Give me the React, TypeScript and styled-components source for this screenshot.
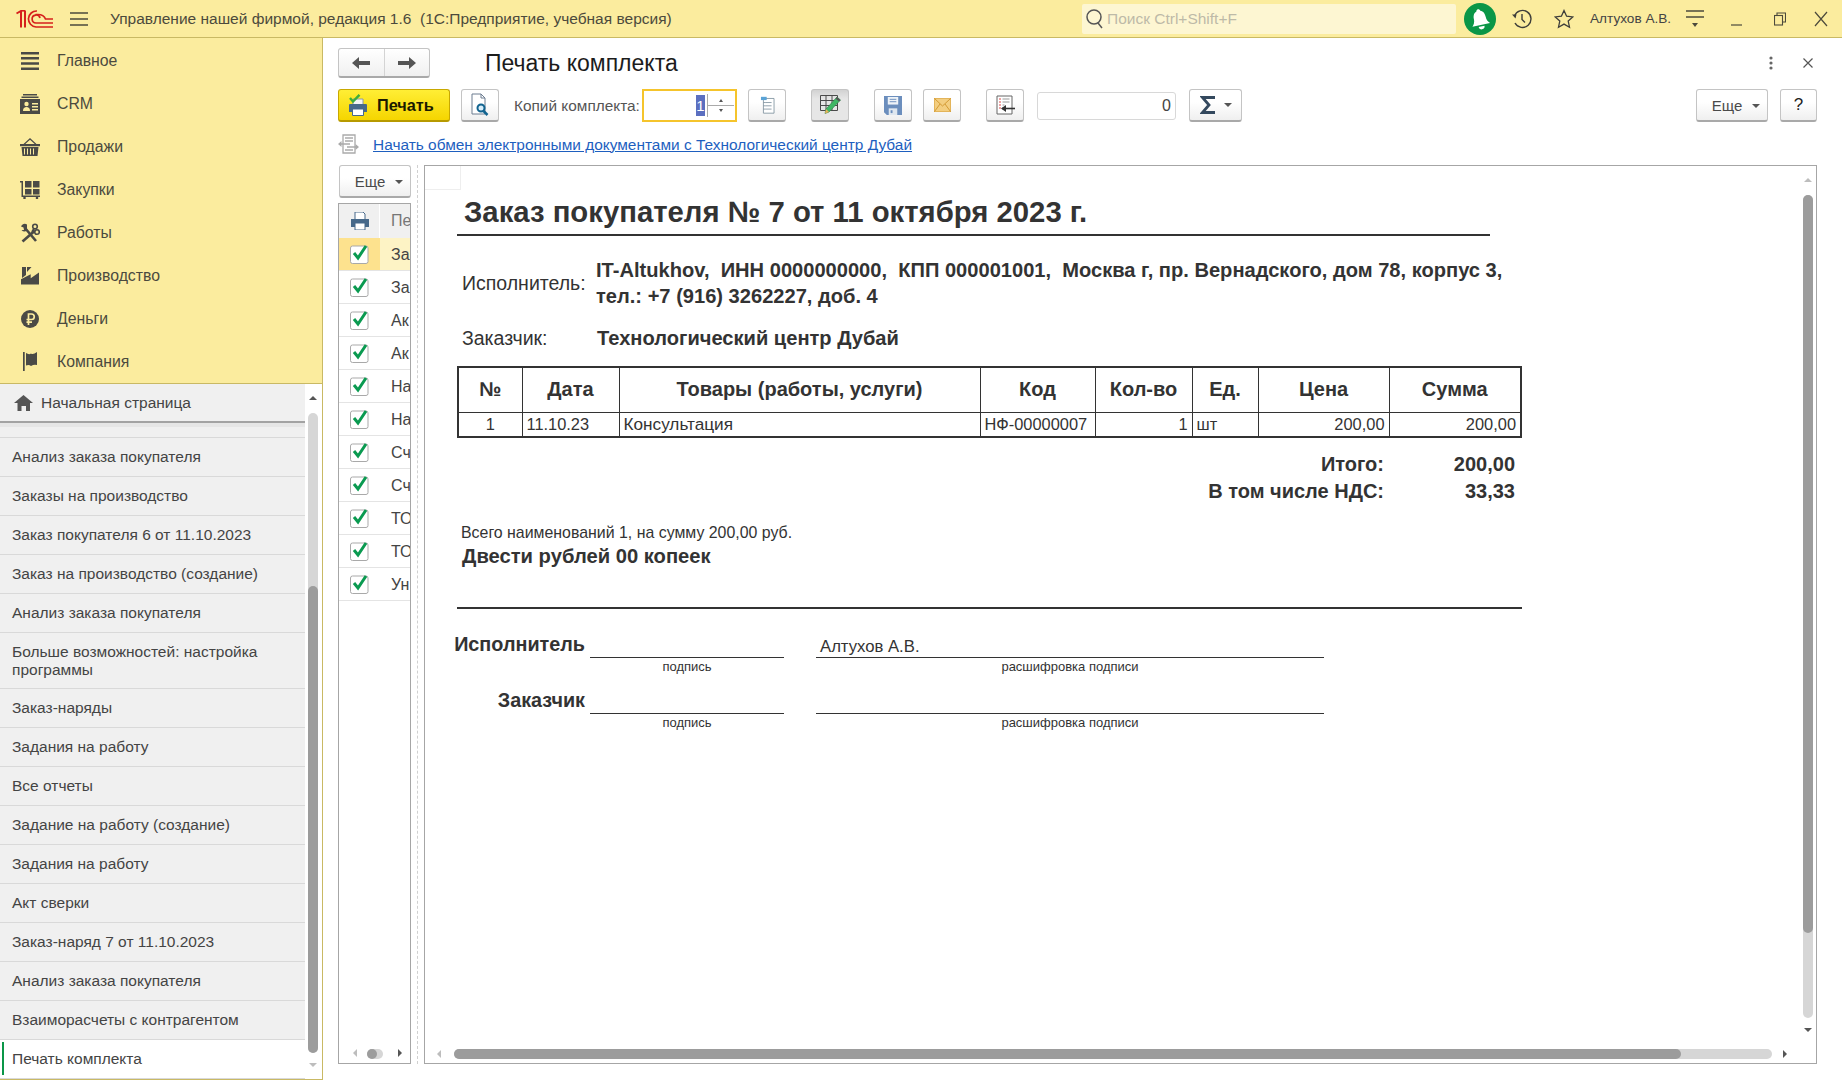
import React from 'react';
import styled, { createGlobalStyle } from 'styled-components';

const Global = createGlobalStyle`
  html, body { margin: 0; padding: 0; height: 1080px; overflow: hidden; background: #fff; }
  body { font-family: "Liberation Sans", Arial, sans-serif; color: #333; }
  * { box-sizing: border-box; }
`;

const Shell = styled.div`
  width: 1842px;
  height: 1080px;
  display: grid;
  grid-template-rows: 38px 1fr;
  overflow: hidden;
`;

const TopBar = styled.header`
  display: flex;
  align-items: center;
  background: #fbec9e;
  border-bottom: 1px solid #c9b964;
  padding-left: 16px;
`;

const AppTitle = styled.div`
  margin-left: 22px;
  width: 972px;
  font-size: 15.5px;
  color: #4c4a3c;
  white-space: pre;
`;

const Search = styled.div`
  width: 374px;
  height: 30px;
  display: flex;
  align-items: center;
  gap: 3px;
  padding-left: 3px;
  background: #fdf6d2;
  border-radius: 2px;
  font-size: 15.5px;
  color: #bdbaa8;
`;

const Bell = styled.div`
  width: 32px;
  height: 32px;
  margin-left: 8px;
  border-radius: 50%;
  background: #0a9647;
  display: flex;
  align-items: center;
  justify-content: center;
`;

const TopIcon = styled.div<{ $ml: number }>`
  margin-left: ${p => p.$ml}px;
  display: flex;
`;

const UserName = styled.div`
  margin-left: 16px;
  width: 81px;
  font-size: 13.6px;
  color: #444;
  white-space: nowrap;
`;

const Main = styled.div`
  display: grid;
  grid-template-columns: 323px 1fr;
  min-height: 0;
`;

const Side = styled.aside`
  display: flex;
  flex-direction: column;
  border-right: 1px solid #c9b964;
  border-bottom: 1px solid #c9b964;
  min-height: 0;
`;

const Sections = styled.nav`
  height: 346px;
  flex: none;
  padding-top: 1px;
  background: #fbec9e;
  border-bottom: 1px solid #c9b964;
`;

const SectionRow = styled.div`
  height: 43px;
  display: flex;
  align-items: center;
  padding-left: 19px;
  gap: 16px;
  font-size: 15.8px;
  color: #4b4a3e;
`;

const SectionIcon = styled.span`
  width: 22px;
  height: 22px;
  display: flex;
  align-items: center;
  justify-content: center;
`;

const HistoryWrap = styled.div`
  position: relative;
  flex: 1;
  min-height: 0;
  background: #fff;
`;

const HistoryList = styled.div`
  width: 305px;
  height: 100%;
  background: #f0f0f0;
  display: flex;
  flex-direction: column;
`;

const HomeTab = styled.div`
  height: 39px;
  flex: none;
  display: flex;
  align-items: center;
  gap: 8px;
  padding: 0 0 0 14px;
  background: #f0f0f0;
  border-bottom: 2px solid #a3a3a3;
  font-size: 15.5px;
  color: #444;
`;

const HiddenRow = styled.div`
  height: 15px;
  flex: none;
  background: linear-gradient(#e6e6e6 0 4px, #f0f0f0 4px);
  border-bottom: 1px solid #d9d9d9;
`;

const HistoryRow = styled.div<{ $active?: boolean; $tall?: boolean }>`
  height: ${p => (p.$tall ? 56 : 39)}px;
  flex: none;
  display: flex;
  align-items: center;
  padding: 0 20px 0 12px;
  font-size: 15.5px;
  line-height: 18px;
  color: #444;
  border-bottom: 1px solid #d9d9d9;
  background: ${p => (p.$active ? '#fff' : 'transparent')};
  position: relative;
  ${p => p.$active && `
    &::before {
      content: "";
      position: absolute;
      left: 2px;
      top: 2px;
      bottom: 3px;
      width: 2px;
      background: #0a9647;
    }
  `}
`;

const VBar = styled.div<{ $top: number; $height: number; $left: number; $dark?: boolean }>`
  position: absolute;
  left: ${p => p.$left}px;
  top: ${p => p.$top}px;
  width: 10px;
  height: ${p => p.$height}px;
  border-radius: 5px;
  background: ${p => (p.$dark ? '#9c9c9c' : '#d6d6d6')};
`;

const HBar = styled.div<{ $left: number; $width: number; $dark?: boolean }>`
  position: absolute;
  bottom: 4px;
  left: ${p => p.$left}px;
  width: ${p => p.$width}px;
  height: 10px;
  border-radius: 5px;
  background: ${p => (p.$dark ? '#9c9c9c' : '#d6d6d6')};
`;

const Arrow = styled.i<{ $x: number; $y: number; $dir: 'up' | 'down' | 'left' | 'right'; $dark?: boolean }>`
  position: absolute;
  left: ${p => p.$x}px;
  top: ${p => p.$y}px;
  width: 0;
  height: 0;
  border: 4px solid transparent;
  ${p => `border-${{ up: 'bottom', down: 'top', left: 'right', right: 'left' }[p.$dir]}-color: ${p.$dark ? '#555' : '#bdbdbd'};`}
`;

const Work = styled.main`
  display: flex;
  flex-direction: column;
  padding: 10px 25px 16px 15px;
  min-width: 0;
  min-height: 0;
`;

const HeadRow = styled.div`
  height: 30px;
  flex: none;
  display: flex;
  align-items: center;
`;

const NavGroup = styled.div`
  width: 92px;
  height: 30px;
  display: flex;
  border: 1px solid #c4c4c4;
  border-bottom: 2px solid #a9a9a9;
  border-radius: 3px;
  background: linear-gradient(#fff, #f0f0f0);
`;

const NavPart = styled.div`
  flex: 1;
  display: flex;
  align-items: center;
  justify-content: center;
  & + & { border-left: 1px solid #d4d4d4; }
`;

const PageTitle = styled.h1`
  margin: 0 0 0 55px;
  font-size: 23px;
  font-weight: 400;
  color: #1c1c1c;
`;

const HeadActions = styled.div`
  margin-left: auto;
  display: flex;
  align-items: center;
  gap: 30px;
  padding-right: 4px;
`;

const ToolRow = styled.div`
  height: 33px;
  flex: none;
  margin-top: 11px;
  display: flex;
  align-items: center;
`;

const Btn = styled.div<{ $ml?: number; $w?: number; $pressed?: boolean }>`
  margin-left: ${p => p.$ml ?? 0}px;
  width: ${p => p.$w ?? 38}px;
  height: 33px;
  flex: none;
  display: flex;
  align-items: center;
  justify-content: center;
  gap: 9px;
  border: 1px solid #c4c4c4;
  border-bottom: 2px solid #a9a9a9;
  border-radius: 3px;
  background: ${p => (p.$pressed ? 'linear-gradient(#d2d2d2, #e6e6e6 30%)' : 'linear-gradient(#fff 40%, #efefef)')};
  font-size: 16px;
  color: #4a4a4a;
`;

const MoreBtn = styled(Btn)`
  font-size: 15px;
  gap: 10px;
  padding: 1px 0 0 8px;
`;

const HelpBtn = styled(Btn)`
  font-size: 17px;
  color: #222;
`;

const PrintBtn = styled.div`
  width: 112px;
  height: 33px;
  flex: none;
  display: flex;
  align-items: center;
  gap: 9px;
  padding-left: 9px;
  border: 1px solid #c8a800;
  border-bottom: 2px solid #b79a00;
  border-radius: 3px;
  background: linear-gradient(#ffee35, #f5d500);
  font-size: 16.3px;
  font-weight: 700;
  color: #1a1a00;
`;

const Caret = styled.i`
  width: 0;
  height: 0;
  border: 4px solid transparent;
  border-top: 4px solid #555;
  margin-top: 4px;
`;

const FieldLabel = styled.span`
  margin-left: 15px;
  width: 128px;
  font-size: 15.4px;
  color: #555;
  white-space: nowrap;
`;

const Spin = styled.div`
  width: 95px;
  height: 33px;
  flex: none;
  display: flex;
  border: 2px solid #f5c42c;
  background: #fff;
  padding: 3px 1px 3px 0;
`;

const SpinValue = styled.div`
  flex: 1;
  display: flex;
  justify-content: flex-end;
  align-items: center;
  font-size: 16px;
  padding-right: 2px;
  border-right: 1px solid #aaa;
`;

const Selected = styled.span`
  width: 9px;
  height: 21px;
  background: #5b6fc0;
  color: #fff;
  text-align: center;
  line-height: 21px;
  font-size: 15px;
`;

const SpinArrows = styled.div`
  width: 26px;
  display: grid;
  grid-template-rows: 1fr 1fr;
  justify-items: center;
  align-items: center;
  div:first-child { width: 100%; height: 100%; display: flex; align-items: center; justify-content: center; border-bottom: 1px solid #aaa; }
`;

const MiniUp = styled.i`
  width: 0;
  height: 0;
  border: 2.5px solid transparent;
  border-bottom: 3px solid #555;
`;

const MiniDown = styled.i`
  width: 0;
  height: 0;
  border: 2.5px solid transparent;
  border-top: 3px solid #555;
`;

const NumField = styled.div`
  margin-left: 13px;
  width: 139px;
  height: 28px;
  flex: none;
  border: 1px solid #d8d8d8;
  border-radius: 3px;
  text-align: right;
  line-height: 26px;
  padding-right: 4px;
  font-size: 16px;
  color: #444;
`;

const LinkRow = styled.div`
  height: 43px;
  flex: none;
  display: flex;
  align-items: center;
`;

const DocLink = styled.a`
  margin: 2px 0 0 14px;
  font-size: 15.45px;
  color: #1e5fbf;
  text-decoration: underline;
  white-space: nowrap;
`;

const Split = styled.div`
  flex: 1;
  min-height: 0;
  display: flex;
`;

const LeftCol = styled.div`
  width: 73px;
  flex: none;
  display: flex;
  flex-direction: column;
`;

const SmallMore = styled(MoreBtn)`
  width: 72px;
  margin-left: 1px;
  flex: none;
`;

const FormsBox = styled.div`
  position: relative;
  flex: 1;
  margin-top: 5px;
  border: 1px solid #a6a6a6;
  overflow: hidden;
`;

const FormRow = styled.div<{ $head?: boolean }>`
  height: ${p => (p.$head ? 34 : 33)}px;
  display: flex;
  border-bottom: ${p => (p.$head ? 'none' : '1px solid #e4e4e4')};
`;

const CheckCell = styled.div<{ $head?: boolean; $current?: boolean }>`
  width: 41px;
  flex: none;
  display: flex;
  align-items: center;
  justify-content: center;
  padding-left: 1px;
  background: ${p => (p.$head ? '#f0f0f0' : p.$current ? '#fde28e' : '#fff')};
  border-right: 1px solid ${p => (p.$head ? '#fff' : 'transparent')};
`;

const NameCell = styled.div<{ $head?: boolean; $current?: boolean }>`
  flex: 1;
  padding-left: 11px;
  font-size: 16px;
  line-height: 33px;
  white-space: nowrap;
  overflow: hidden;
  color: ${p => (p.$head ? '#777' : '#444')};
  background: ${p => (p.$head ? '#f0f0f0' : p.$current ? '#fdf3c5' : '#fff')};
`;

const Splitter = styled.div`
  width: 13px;
  flex: none;
  display: flex;
  justify-content: center;
  &::before {
    content: "";
    border-left: 1px dashed #d0d0d0;
  }
`;

const DocPane = styled.section`
  position: relative;
  flex: 1;
  min-width: 0;
  border: 1px solid #a6a6a6;
  padding-left: 32px;
  color: #333;
  overflow: hidden;
`;

const Corner = styled.div`
  position: absolute;
  left: 0;
  top: 0;
  width: 36px;
  height: 24px;
  border-right: 1px solid #eee;
  border-bottom: 1px solid #eee;
`;

const DocTitle = styled.div`
  width: 1033px;
  margin-top: 25px;
  height: 45px;
  line-height: 42px;
  padding-left: 7px;
  border-bottom: 2px solid #333;
  font-size: 29.3px;
  font-weight: 700;
  white-space: nowrap;
`;

const Party = styled.div<{ $mt: number }>`
  margin-top: ${p => p.$mt}px;
  padding-left: 5px;
  display: grid;
  grid-template-columns: 133px 1fr;
  align-items: center;
  font-size: 19.5px;
  line-height: 26px;
`;

const PartyName = styled.div<{ $shift?: number }>`
  font-weight: 700;
  font-size: 20.1px;
  white-space: pre;
  margin-left: ${p => p.$shift ?? 0}px;
`;

const Sheet = styled.table`
  margin-top: 15px;
  width: 1063px;
  table-layout: fixed;
  border-collapse: collapse;
  border: 2px solid #333;
`;

const HeadCell = styled.th`
  height: 45px;
  padding: 0;
  border: 1px solid #333;
  font-size: 20px;
  text-align: center;
`;

const BodyCell = styled.td<{ $align?: string; $size?: number }>`
  height: 25px;
  padding: 0 4px;
  border: 1px solid #333;
  font-size: ${p => p.$size ?? 16.4}px;
  text-align: ${p => p.$align ?? 'left'};
  white-space: nowrap;
`;

const TotalRow = styled.div<{ $mt?: number }>`
  margin-top: ${p => p.$mt ?? 0}px;
  width: 1065px;
  height: 27px;
  display: flex;
  justify-content: flex-end;
  align-items: center;
  font-size: 20px;
  font-weight: 700;
`;

const TotalValue = styled.div`
  width: 138px;
  padding-right: 7px;
  text-align: right;
`;

const AmountNote = styled.div`
  margin: 17px 0 0 4px;
  line-height: 22px;
  font-size: 15.9px;
`;

const AmountWords = styled.div`
  margin: 1px 0 0 5px;
  line-height: 23px;
  font-size: 20.2px;
  font-weight: 700;
`;

const DocRule = styled.div`
  margin-top: 39px;
  width: 1065px;
  height: 2px;
  background: #333;
`;

const SignGrid = styled.div<{ $mt: number }>`
  margin: ${p => p.$mt}px 0 0 -3px;
  display: grid;
  grid-template-columns: 131px 199px 540px;
  column-gap: 0;
`;

const SignLabel = styled.div`
  height: 26px;
  line-height: 25px;
  text-align: right;
  font-size: 19.8px;
  font-weight: 700;
`;

const SignLine = styled.div<{ $ml: number }>`
  height: 26px;
  margin-left: ${p => p.$ml}px;
  padding-left: 4px;
  line-height: 30px;
  font-size: 16.7px;
  border-bottom: 1px solid #333;
`;

const SignHint = styled.div<{ $ml: number }>`
  margin-left: ${p => p.$ml}px;
  padding-top: 2px;
  height: 16px;
  line-height: 14px;
  font-size: 13px;
  text-align: center;
`;

const ic = '#4a4a46';

const Logo = () => (
  <svg width="37" height="18" viewBox="0 0 37 18" fill="none" stroke="#d6201c">
    <path d="M0.500 3.500L5 1V17.500M9 0.500V17.500" strokeWidth="2" />
    <path d="M5 0.800H9" strokeWidth="1.600" />
    <path d="M21 1A8 8 0 1 0 20 17H37" strokeWidth="1.700" />
    <path d="M24 8A4 4 0 1 0 20 13H37" strokeWidth="1.700" />
    <path d="M19.500 4.500H22C26 4.500 28.500 6.500 29.500 9H37" strokeWidth="1.700" />
  </svg>
);

const Burger = () => (
  <svg width="18" height="14" viewBox="0 0 18 14" stroke="#4c4a3c" strokeWidth="1.300">
    <path d="M0 1h18M0 7h18M0 13h18" />
  </svg>
);

const Glass = () => (
  <svg width="19" height="22" viewBox="0 0 19 22" fill="none" stroke="#555" strokeWidth="1.500">
    <circle cx="9" cy="9" r="7" />
    <path d="M13 15l4 5" />
  </svg>
);

const BellIcon = () => (
  <svg width="20" height="22" viewBox="0 0 20 22" fill="#fff" style={{ transform: 'rotate(-12deg)' }}>
    <path d="M10 1c1 0 2 1 2 2 3 1 4 4 4 7 0 3 1 5 3 7H1c2-2 3-4 3-7 0-3 1-6 4-7 0-1 1-2 2-2z" />
    <path d="M7 18.500h6a3 3 0 0 1-6 0z" />
  </svg>
);

const Clock = () => (
  <svg width="22" height="20" viewBox="0 0 22 20" fill="none" stroke="#3e3e3a" strokeWidth="1.400">
    <path d="M3.500 7A8.500 8.500 0 1 1 4 14" />
    <path d="M11 5v5.500l3 3" />
    <path d="M1 5.500l4.500 0-1 4z" fill="#3e3e3a" stroke="none" />
  </svg>
);

const Star = () => (
  <svg width="20" height="20" viewBox="0 0 20 20" fill="none" stroke="#3e3e3a" strokeWidth="1.300">
    <path d="M10 1.500l2.600 5.700 6.200.7-4.600 4.200 1.300 6.100L10 15.100l-5.500 3.100 1.300-6.100-4.600-4.200 6.200-.7z" />
  </svg>
);

const Funnel = () => (
  <svg width="18" height="20" viewBox="0 0 18 20" stroke="#4c4a3c" strokeWidth="1.300" fill="#4c4a3c">
    <path d="M0 2h18M0 8h18" fill="none" />
    <path d="M6 14h6l-3 4z" stroke="none" />
  </svg>
);

const Minimize = () => (
  <svg width="11" height="14" viewBox="0 0 11 14" stroke="#4c4a3c" strokeWidth="1.200"><path d="M0 13h11" /></svg>
);

const Restore = () => (
  <svg width="12" height="14" viewBox="0 0 12 14" fill="none" stroke="#4c4a3c" strokeWidth="1.100">
    <rect x="0.500" y="3.500" width="8" height="9.500" />
    <path d="M3 3.500V1h8.500v9h-3" />
  </svg>
);

const WinClose = () => (
  <svg width="14" height="16" viewBox="0 0 14 16" stroke="#4c4a3c" strokeWidth="1.200"><path d="M1 1l12 14M13 1L1 15" /></svg>
);

const IMenu = () => (
  <svg width="18" height="18" viewBox="0 0 18 18" fill={ic}><path d="M0 0h18v2.500H0zM0 5h18v2.500H0zM0 10.200h18v2.500H0zM0 15.500h18V18H0z" /></svg>
);
const ICrm = () => (
  <svg width="20" height="20" viewBox="0 0 20 20" fill={ic}>
    <path d="M3 0h14v1.500H3zM1.500 2.500h17V4h-17zM0 5h20v15H0z" />
    <circle cx="6.500" cy="10" r="2.200" fill="#fbec9e" />
    <path d="M3 17c0-3 1.500-4 3.500-4s3.500 1 3.500 4z" fill="#fbec9e" />
    <path d="M12 9h6v1.500h-6zM12 12h6v1.500h-6zM12 15h6v1.500h-6z" fill="#fbec9e" />
  </svg>
);
const IBasket = () => (
  <svg width="20" height="18" viewBox="0 0 20 18" fill={ic}>
    <path d="M10 0l6.500 6h-1.800L10 1.800 5.300 6H3.500z" />
    <path d="M0 6h20v2.200H0z" />
    <path d="M1.500 9h17l-1 9h-15zM4 10.500v6h1v-6zM7 10.500v6h1v-6zM10 10.500v6h1v-6zM13 10.500v6h1v-6z" fillRule="evenodd" />
  </svg>
);
const ICart = () => (
  <svg width="20" height="18" viewBox="0 0 20 18" fill={ic}>
    <path d="M0 0h3v14.500h17V16H1.500V1.500H0z" />
    <path d="M5 0h6.500v6.500H5zM13 0h6.500v6.500H13zM5 8h6.500v5.500H5zM13 8h6.500v5.500H13z" />
    <circle cx="4.500" cy="17" r="1.300" /><circle cx="17" cy="17" r="1.300" />
  </svg>
);
const ITools = () => (
  <svg width="20" height="20" viewBox="0 0 20 20" fill="none" stroke={ic}>
    <path d="M5 5l11 13" strokeWidth="2.600" />
    <path d="M14.500 8L2.500 18.500" strokeWidth="2.600" />
    <path d="M7 1.500A4 4 0 0 0 1 3.500L3.500 4.500 4 7 1.500 7A4 4 0 0 0 7 7.500z" fill={ic} strokeWidth="0" />
    <circle cx="15" cy="3.500" r="2.300" strokeWidth="1.600" />
    <circle cx="17" cy="9" r="2.300" strokeWidth="1.600" />
    <path d="M14 5.500L12 9M15 8l-3 2" strokeWidth="1.800" />
  </svg>
);
const IFactory = () => (
  <svg width="18" height="18" viewBox="0 0 18 18" fill={ic}>
    <path d="M0 17.500h18V5.500l-8.300 5.800v-4L0 12.300z" />
    <path d="M1 0h4v8l-4 3zM6 0h4.500L6 5z" />
  </svg>
);
const IMoney = () => (
  <svg width="18" height="18" viewBox="0 0 18 18">
    <circle cx="9" cy="9" r="9" fill={ic} />
    <path d="M7.500 15V4h3a2.700 2.700 0 0 1 0 5.500H5.500M5.500 12.200h5.500" fill="none" stroke="#fbec9e" strokeWidth="1.700" />
  </svg>
);
const IFlag = () => (
  <svg width="15" height="19" viewBox="0 0 15 19" fill={ic}>
    <path d="M0 0h1.700v19H0z" />
    <path d="M3 1q3 2 5 .500 2 1.500 6-1.500V13q-3-1-6 1-2-1.500-5-.500z" />
  </svg>
);
const IHome = () => (
  <svg width="19" height="16" viewBox="0 0 19 16" fill="#555"><path d="M9.500 0L19 8h-3v8h-4v-5H7.500v5h-4V8H0z" /></svg>
);
const ArrowBack = ({ flip }: { flip?: boolean }) => (
  <svg width="18" height="14" viewBox="0 0 18 14" fill="#555" style={flip ? { transform: 'scaleX(-1)' } : undefined}>
    <path d="M0 7l7-6v4h11v4H7v4z" />
  </svg>
);
const IPrintCheck = () => (
  <svg width="20" height="22" viewBox="0 0 20 22">
    <path d="M5 5h10v7H5z" fill="#f4f4f4" stroke="#8a98a6" />
    <path d="M1 11a1 1 0 0 1 1-1h16a1 1 0 0 1 1 1v7H1z" fill="#47698a" />
    <path d="M4.500 15h11v6.500h-11z" fill="#fff" stroke="#47698a" />
    <path d="M2 4l3 3.500L11.500 0.800" fill="none" stroke="#3fae3a" strokeWidth="2.400" />
  </svg>
);
const IPreview = () => (
  <svg width="18" height="24" viewBox="0 0 18 24" fill="none">
    <path d="M1 1h9l4 4v16H1z" fill="#fff" stroke="#6c7c90" />
    <path d="M10 1v4h4" stroke="#6c7c90" />
    <circle cx="10" cy="15" r="3.500" stroke="#11638f" strokeWidth="2" fill="#d8eefa" />
    <path d="M12.500 18l4 4" stroke="#11638f" strokeWidth="2.500" />
  </svg>
);
const ITree = () => (
  <svg width="15" height="18" viewBox="0 0 18 22" fill="none" stroke="#7b8e9c">
    <path d="M4 3h13v18H4z" fill="#fff" />
    <path d="M1 1h7v4H1z" fill="#5aa3d6" stroke="none" />
    <path d="M7 8h7M7 12h7M7 16h7M4 8h3M4 12h3M4 16h3" />
  </svg>
);
const IGridPen = () => (
  <svg width="22" height="24" viewBox="0 0 22 24" fill="none">
    <path d="M1.500 2.500h17v15h-17zM1.500 7.500h17M1.500 12.500h17M7 2.500v15M13 2.500v15" stroke="#4a4a4a" />
    <path d="M18 4l3.500 3L10 19l-4 1.500 1-4.500z" fill="#3fb765" stroke="#2b7a45" strokeWidth="0.600" />
    <path d="M18 4l3.500 3-1.500 1.500L16.500 5.500z" fill="#555" />
    <path d="M7 16l3 3-4 1.500z" fill="#e8b35a" />
  </svg>
);
const ISave = () => (
  <svg width="18" height="19" viewBox="0 0 19 20">
    <path d="M0 0h19v20H3l-3-3z" fill="#6b8ebd" />
    <path d="M4 1h11v8H4z" fill="#eef3f8" />
    <path d="M6 3.500h7M6 6h7" stroke="#6b8ebd" />
    <path d="M5 13h9v7H5z" fill="#dfe7ef" />
    <path d="M7 15h2v3H7z" fill="#6b8ebd" />
  </svg>
);
const IMail = () => (
  <svg width="17" height="14" viewBox="0 0 17 14">
    <path d="M0 0h17v14H0z" fill="#f3ce80" stroke="#d39a34" />
    <path d="M0.500 0.500L8.500 8l8-7.500M0.500 13.500L6 6M16.500 13.500L11 6" fill="none" stroke="#d39a34" />
  </svg>
);
const IBackList = () => (
  <svg width="19" height="20" viewBox="0 0 19 20" fill="none">
    <path d="M1 1h15v18H1z" fill="#fff" stroke="#666" />
    <path d="M3 4h2M3 7h2M3 10h2M3 13h2" stroke="#d44" />
    <path d="M6.500 4h7M6.500 7h7M6.500 10h2" stroke="#999" />
    <path d="M6 13.500h13" stroke="#333" strokeWidth="1.600" />
    <path d="M5 13.500L10 10v7z" fill="#333" />
  </svg>
);
const ISigma = () => (
  <svg width="15" height="18" viewBox="0 0 15 18" fill="none" stroke="#34495e" strokeWidth="2.800">
    <path d="M15 1.500H2.500L9 9l-6.500 7.500H15" />
  </svg>
);
const IExchange = () => (
  <svg width="21" height="20" viewBox="0 0 21 20" fill="none" stroke="#aaa" strokeWidth="1.300">
    <path d="M5 1h12v18H5z" fill="#fff" />
    <path d="M7 4h8M7 7h8M3 10h9M9 13h9M7 16h8" />
    <path d="M0 10l3.500-3v6zM21 13l-3.500-3v6z" fill="#aaa" stroke="none" />
  </svg>
);
const IPrinter = () => (
  <svg width="18" height="18" viewBox="0 0 18 18">
    <path d="M4 0h8l2 2v6H4z" fill="#fff" stroke="#47698a" />
    <path d="M0 7h18v8H0z" fill="#47698a" />
    <path d="M4 11h10v7H4z" fill="#fff" stroke="#47698a" />
  </svg>
);
const Check = () => (
  <svg width="20" height="20" viewBox="0 0 20 20" fill="none">
    <rect x="0.500" y="2" width="17.500" height="17.500" rx="2" fill="#fff" stroke="#a9a9a9" />
    <path d="M4 9l4 5L16 2" stroke="#0a9a50" strokeWidth="3" />
  </svg>
);
const Dots = () => (
  <svg width="4" height="14" viewBox="0 0 4 14" fill="#666"><circle cx="2" cy="2" r="1.600" /><circle cx="2" cy="7" r="1.600" /><circle cx="2" cy="12" r="1.600" /></svg>
);
const SmallX = () => (
  <svg width="10" height="10" viewBox="0 0 10 10" stroke="#555" strokeWidth="1.200"><path d="M0.500 0.500l9 9M9.500 0.500l-9 9" /></svg>
);

const sections: [string, React.ReactNode][] = [
  ['Главное', <IMenu />],
  ['CRM', <ICrm />],
  ['Продажи', <IBasket />],
  ['Закупки', <ICart />],
  ['Работы', <ITools />],
  ['Производство', <IFactory />],
  ['Деньги', <IMoney />],
  ['Компания', <IFlag />],
];

const history = [
  'Анализ заказа покупателя',
  'Заказы на производство',
  'Заказ покупателя 6 от 11.10.2023',
  'Заказ на производство (создание)',
  'Анализ заказа покупателя',
  'Больше возможностей: настройка программы',
  'Заказ-наряды',
  'Задания на работу',
  'Все отчеты',
  'Задание на работу (создание)',
  'Задания на работу',
  'Акт сверки',
  'Заказ-наряд 7 от 11.10.2023',
  'Анализ заказа покупателя',
  'Взаиморасчеты с контрагентом',
];

// only the visible part of each name: the column is dragged nearly shut in the picture
const forms = ['За', 'За', 'Ак', 'Ак', 'На', 'На', 'Сч', 'Сч', 'ТО', 'ТО', 'Ун'];
const colWidths = [64, 97, 361, 115, 97, 66, 131, 132];
const heads = ['№', 'Дата', 'Товары (работы, услуги)', 'Код', 'Кол-во', 'Ед.', 'Цена', 'Сумма'];

export default function App() {
  return (
    <Shell>
      <Global />
      <TopBar>
        <Logo />
        <TopIcon $ml={17}><Burger /></TopIcon>
        <AppTitle>Управление нашей фирмой, редакция 1.6  (1С:Предприятие, учебная версия)</AppTitle>
        <Search><Glass />Поиск Ctrl+Shift+F</Search>
        <Bell><BellIcon /></Bell>
        <TopIcon $ml={15}><Clock /></TopIcon>
        <TopIcon $ml={21}><Star /></TopIcon>
        <UserName>Алтухов А.В.</UserName>
        <TopIcon $ml={15}><Funnel /></TopIcon>
        <TopIcon $ml={27}><Minimize /></TopIcon>
        <TopIcon $ml={32}><Restore /></TopIcon>
        <TopIcon $ml={28}><WinClose /></TopIcon>
      </TopBar>
      <Main>
        <Side>
          <Sections>
            {sections.map(([name, icon]) => (
              <SectionRow key={name}>
                <SectionIcon>{icon}</SectionIcon>
                {name}
              </SectionRow>
            ))}
          </Sections>
          <HistoryWrap>
            <HistoryList>
              <HomeTab><IHome />Начальная страница</HomeTab>
              <HiddenRow />
              {history.map((h, i) => (
                <HistoryRow key={i} $tall={h.length >= 40}>{h}</HistoryRow>
              ))}
              <HistoryRow $active>Печать комплекта</HistoryRow>
            </HistoryList>
            <Arrow $x={309} $y={8} $dir="up" $dark />
            <VBar $left={308} $top={29} $height={640} />
            <VBar $left={308} $top={202} $height={467} $dark />
            <Arrow $x={309} $y={679} $dir="down" />
          </HistoryWrap>
        </Side>
        <Work>
          <HeadRow>
            <NavGroup>
              <NavPart><ArrowBack /></NavPart>
              <NavPart><ArrowBack flip /></NavPart>
            </NavGroup>
            <PageTitle>Печать комплекта</PageTitle>
            <HeadActions><Dots /><SmallX /></HeadActions>
          </HeadRow>
          <ToolRow>
            <PrintBtn><IPrintCheck />Печать</PrintBtn>
            <Btn $ml={11}><IPreview /></Btn>
            <FieldLabel>Копий комплекта:</FieldLabel>
            <Spin>
              <SpinValue><Selected>1</Selected></SpinValue>
              <SpinArrows>
                <div><MiniUp /></div>
                <MiniDown />
              </SpinArrows>
            </Spin>
            <Btn $ml={11}><ITree /></Btn>
            <Btn $ml={25} $pressed><IGridPen /></Btn>
            <Btn $ml={25}><ISave /></Btn>
            <Btn $ml={11}><IMail /></Btn>
            <Btn $ml={25}><IBackList /></Btn>
            <NumField>0</NumField>
            <Btn $ml={13} $w={53}><ISigma /><Caret /></Btn>
            <MoreBtn $ml={454} $w={72}>Еще<Caret /></MoreBtn>
            <HelpBtn $ml={12} $w={37}>?</HelpBtn>
          </ToolRow>
          <LinkRow>
            <IExchange />
            <DocLink>Начать обмен электронными документами с Технологический центр Дубай</DocLink>
          </LinkRow>
          <Split>
            <LeftCol>
              <SmallMore>Еще<Caret /></SmallMore>
              <FormsBox>
                <FormRow $head>
                  <CheckCell $head><IPrinter /></CheckCell>
                  <NameCell $head>Пе</NameCell>
                </FormRow>
                {forms.map((f, i) => (
                  <FormRow key={i}>
                    <CheckCell $current={i === 0}><Check /></CheckCell>
                    <NameCell $current={i === 0}>{f}</NameCell>
                  </FormRow>
                ))}
                <Arrow $x={10} $y={845} $dir="left" />
                <HBar $left={28} $width={16} />
                <HBar $left={28} $width={10} $dark />
                <Arrow $x={59} $y={845} $dir="right" $dark />
              </FormsBox>
            </LeftCol>
            <Splitter />
            <DocPane>
              <Corner />
              <DocTitle>Заказ покупателя № 7 от 11 октября 2023 г.</DocTitle>
              <Party $mt={21}>
                <span>Исполнитель:</span>
                <PartyName $shift={1}>{'IT-Altukhov,  ИНН 0000000000,  КПП 000001001,  Москва г, пр. Вернадского, дом 78, корпус 3,\nтел.: +7 (916) 3262227, доб. 4'}</PartyName>
              </Party>
              <Party $mt={16}>
                <span>Заказчик:</span>
                <PartyName $shift={2}>Технологический центр Дубай</PartyName>
              </Party>
              <Sheet>
                <colgroup>
                  {colWidths.map((w, i) => <col key={i} width={w} />)}
                </colgroup>
                <thead>
                  <tr>{heads.map(h => <HeadCell key={h}>{h}</HeadCell>)}</tr>
                </thead>
                <tbody>
                  <tr>
                    <BodyCell $align="center">1</BodyCell>
                    <BodyCell>11.10.23</BodyCell>
                    <BodyCell $size={17.2}>Консультация</BodyCell>
                    <BodyCell>НФ-00000007</BodyCell>
                    <BodyCell $align="right">1</BodyCell>
                    <BodyCell>шт</BodyCell>
                    <BodyCell $align="right">200,00</BodyCell>
                    <BodyCell $align="right">200,00</BodyCell>
                  </tr>
                </tbody>
              </Sheet>
              <TotalRow $mt={13}>Итого:<TotalValue>200,00</TotalValue></TotalRow>
              <TotalRow>В том числе НДС:<TotalValue>33,33</TotalValue></TotalRow>
              <AmountNote>Всего наименований 1, на сумму 200,00 руб.</AmountNote>
              <AmountWords>Двести рублей 00 копеек</AmountWords>
              <DocRule />
              <SignGrid $mt={23}>
                <SignLabel>Исполнитель</SignLabel>
                <SignLine $ml={5} />
                <SignLine $ml={32}>Алтухов А.В.</SignLine>
                <span />
                <SignHint $ml={5}>подпись</SignHint>
                <SignHint $ml={32}>расшифровка подписи</SignHint>
              </SignGrid>
              <SignGrid $mt={14}>
                <SignLabel>Заказчик</SignLabel>
                <SignLine $ml={5} />
                <SignLine $ml={32} />
                <span />
                <SignHint $ml={5}>подпись</SignHint>
                <SignHint $ml={32}>расшифровка подписи</SignHint>
              </SignGrid>
              <Arrow $x={1379} $y={8} $dir="up" />
              <VBar $left={1378} $top={29} $height={823} />
              <VBar $left={1378} $top={29} $height={738} $dark />
              <Arrow $x={1379} $y={862} $dir="down" $dark />
              <Arrow $x={8} $y={884} $dir="left" />
              <HBar $left={29} $width={1318} />
              <HBar $left={29} $width={1227} $dark />
              <Arrow $x={1358} $y={884} $dir="right" $dark />
            </DocPane>
          </Split>
        </Work>
      </Main>
    </Shell>
  );
}
